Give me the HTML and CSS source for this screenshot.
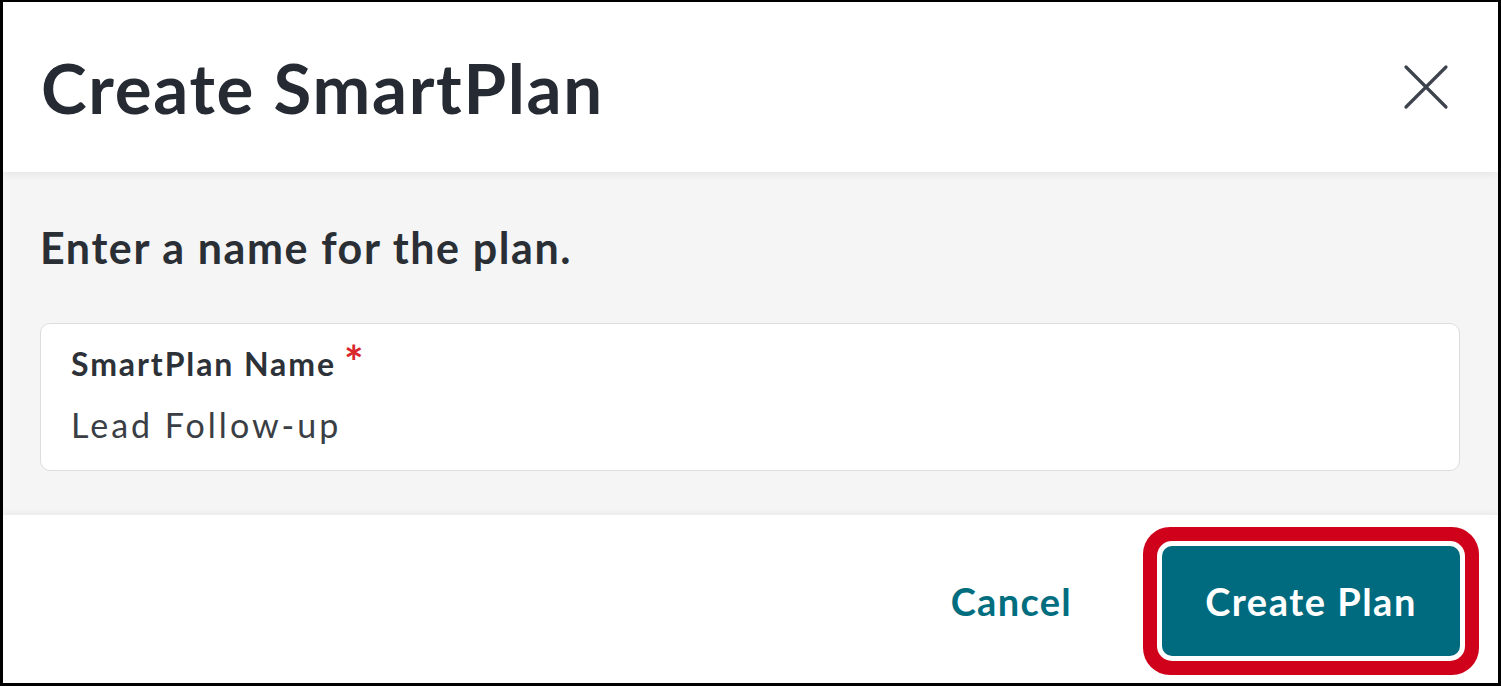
FILE: index.html
```html
<!DOCTYPE html>
<html lang="en">
<head>
<meta charset="utf-8">
<title>Create SmartPlan</title>
<link rel="stylesheet" href="styles.css">
</head>
<body>
<div class="dialog">
  <header class="dlg-head">
    <h1 class="dlg-title">Create SmartPlan</h1>
    <button class="close" aria-label="Close">
      <svg width="46" height="46" viewBox="0 0 46 46" aria-hidden="true">
        <path d="M3 3 L43 43 M43 3 L3 43" fill="none" stroke="currentColor" stroke-width="3.2" stroke-linecap="round"/>
      </svg>
    </button>
  </header>
  <main class="dlg-body">
    <p class="prompt">Enter a name for the plan.</p>
    <div class="field">
      <label class="field-label">SmartPlan Name<span class="req">*</span></label>
      <div class="field-value">Lead Follow-up</div>
    </div>
  </main>
  <footer class="dlg-foot">
    <button class="btn-cancel">Cancel</button>
    <button class="btn-primary">Create Plan</button>
  </footer>
</div>
</body>
</html>
```

FILE: styles.css
```css
* { box-sizing: border-box; }
html, body { margin: 0; padding: 0; background: #fff; }
body { font-family: Lato, "Open Sans", sans-serif; color: #262a31; }

.dialog {
  width: 1501px;
  height: 686px;
  border: 3px solid #000;
  border-top-width: 2px;
  display: flex;
  flex-direction: column;
  overflow: hidden;
}

.dlg-head {
  height: 170px;
  flex: none;
  display: flex;
  align-items: center;
  justify-content: space-between;
  padding: 0 49px 0 38px;
  background: #fff;
  position: relative;
  z-index: 2;
  box-shadow: 0 3px 8px rgba(0,0,0,0.06);
}
.dlg-title {
  margin: 0;
  font-size: 69px;
  font-weight: 700;
  color: #252a33;
  letter-spacing: 1.7px;
}
.close {
  border: 0;
  background: none;
  padding: 0;
  color: #3d434c;
  display: flex;
  cursor: pointer;
}

.dlg-body {
  height: 343px;
  flex: none;
  background: #f5f5f5;
  padding: 50px 38px 0 37px;
}
.prompt {
  margin: 0;
  font-size: 43px;
  font-weight: 700;
  line-height: 52px;
  letter-spacing: 1.6px;
  color: #2a2e35;
}
.field {
  margin-top: 49px;
  height: 148px;
  background: #fff;
  border: 1.5px solid #dddddd;
  border-radius: 10px;
  padding: 20px 30px 0;
}
.field-label {
  display: block;
  font-size: 32px;
  font-weight: 700;
  line-height: 40px;
  letter-spacing: 1.9px;
  color: #2d3138;
}
.req {
  color: #d9262c;
  font-size: 46px;
  margin-left: 8px;
  vertical-align: top;
  line-height: 36px;
  letter-spacing: 0;
}
.field-value {
  margin-top: 20px;
  font-size: 34px;
  font-weight: 400;
  line-height: 42px;
  letter-spacing: 3px;
  color: #3a3e45;
}

.dlg-foot {
  flex: 1;
  background: #fff;
  display: flex;
  align-items: center;
  justify-content: flex-end;
  padding: 3px 38px 0 0;
  box-shadow: 0 -2px 6px rgba(0,0,0,0.05);
  position: relative;
  z-index: 1;
}
.btn-cancel {
  border: 0;
  background: none;
  font-family: inherit;
  font-size: 38px;
  font-weight: 700;
  letter-spacing: 1.3px;
  color: #006e7f;
  padding: 0;
  margin-right: 90px;
  cursor: pointer;
}
.btn-primary {
  width: 298px;
  height: 110px;
  border: 0;
  border-radius: 10px;
  background: #006b7f;
  color: #fff;
  font-family: inherit;
  font-size: 38px;
  font-weight: 700;
  letter-spacing: 1.5px;
  cursor: pointer;
  box-shadow: 0 0 0 5px #fff, 0 0 0 19px #d0021b;
}
```
